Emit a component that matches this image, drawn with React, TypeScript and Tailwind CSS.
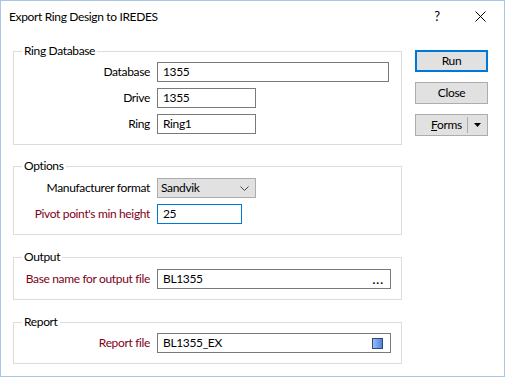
const font = { fontFamily: '"Lato", "Noto Sans", sans-serif' }

function Row({ label, red, children }: { label: string; red?: boolean; children: React.ReactNode }) {
  return (
    <div className="flex items-center h-5">
      <div className={`w-[143px] shrink-0 pr-[7px] text-right whitespace-nowrap ${red ? 'text-[#800020]' : 'text-black'}`}>
        {label}
      </div>
      {children}
    </div>
  )
}

function Group({ title, className, children }: { title: string; className: string; children: React.ReactNode }) {
  return (
    <fieldset className={`border border-[#dcdcdc] ${className}`}>
      <legend className="ml-[8px] px-[2px] leading-4 text-black">{title}</legend>
      {children}
    </fieldset>
  )
}

function TextBox({ value, w, focus, children }: { value: string; w: string; focus?: boolean; children?: React.ReactNode }) {
  return (
    <div className={`h-5 ${w} shrink-0 flex items-center justify-between border ${focus ? 'border-[#0078d7]' : 'border-[#7a7a7a]'} bg-white pl-[5px] pr-[6px]`}>
      <span>{value}</span>
      {children}
    </div>
  )
}

function Button({ label, primary, children }: { label: React.ReactNode; primary?: boolean; children?: React.ReactNode }) {
  return (
    <div
      className={`h-[22px] w-[73px] flex items-center bg-[#e1e1e1] ${primary ? 'border-2 border-[#0078d7]' : 'border border-[#adadad]'}`}
    >
      <div className="flex-1 text-center">{label}</div>
      {children}
    </div>
  )
}

export default function App() {
  return (
    <div style={font} className="w-[505px] h-[377px] bg-white border border-[#a7c6e8] text-[12px] tracking-[-0.35px] text-black flex flex-col">
      <div className="h-[31px] flex items-center pl-2 shrink-0">
        <div className="flex-1 text-[12px]">Export Ring Design to IREDES</div>
        <div className="w-[20px] text-center text-[13px] mr-[28px]">?</div>
        <svg width="11" height="11" viewBox="0 0 11 11" className="mr-[18px]">
          <path d="M0.5 0.5 L10.5 10.5 M10.5 0.5 L0.5 10.5" stroke="#000" strokeWidth="1" />
        </svg>
      </div>
      <div className="flex">
        <div className="ml-[12px] w-[389px] flex flex-col">
          <Group title="Ring Database" className="mt-[11px] pt-[3px] pb-[10px] flex flex-col gap-[6px]">
            <Row label="Database">
              <TextBox value="1355" w="w-[232px]" />
            </Row>
            <Row label="Drive">
              <TextBox value="1355" w="w-[99px]" />
            </Row>
            <Row label="Ring">
              <TextBox value="Ring1" w="w-[99px]" />
            </Row>
          </Group>
          <Group title="Options" className="mt-[13px] pt-[4px] pb-[10px] flex flex-col gap-[6px]">
            <Row label="Manufacturer format">
              <div className="h-5 w-[99px] shrink-0 flex items-center justify-between bg-[#e1e1e1] border border-[#adadad] pl-[3px] pr-[6px]">
                <span>Sandvik</span>
                <svg width="9" height="5" viewBox="0 0 9 5">
                  <path d="M0.5 0.5 L4.5 4.5 L8.5 0.5" fill="none" stroke="#444" strokeWidth="1" />
                </svg>
              </div>
            </Row>
            <Row label="Pivot point's min height" red>
              <TextBox value="25" w="w-[85px]" focus />
            </Row>
          </Group>
          <Group title="Output" className="mt-[14px] pt-[4px] pb-[10px]">
            <Row label="Base name for output file" red>
              <TextBox value="BL1355" w="w-[234px]">
                <span className="font-bold tracking-[1px] leading-none mb-[-2px]">...</span>
              </TextBox>
            </Row>
          </Group>
          <Group title="Report" className="mt-[14px] pt-[3px] pb-[10px]">
            <Row label="Report file" red>
              <TextBox value="BL1355_EX" w="w-[234px]">
                <div className="w-[11px] h-[11px] border border-[#2d4a78] bg-gradient-to-r from-[#9cbcf5] to-[#4f83e0] mr-[1px]" />
              </TextBox>
            </Row>
          </Group>
        </div>
        <div className="ml-[13px] mt-[18px] flex flex-col gap-[10px]">
          <Button label="Run" primary />
          <Button label="Close" />
          <Button
            label={
              <span className="pl-[12px]">
                <span className="underline">F</span>orms
              </span>
            }
          >
            <div className="w-px h-[16px] bg-[#adadad] ml-[2px]" />
            <svg width="7" height="4" viewBox="0 0 7 4" className="mx-[6px]">
              <path d="M0 0 L7 0 L3.5 4 Z" fill="#000" />
            </svg>
          </Button>
        </div>
      </div>
    </div>
  )
}
